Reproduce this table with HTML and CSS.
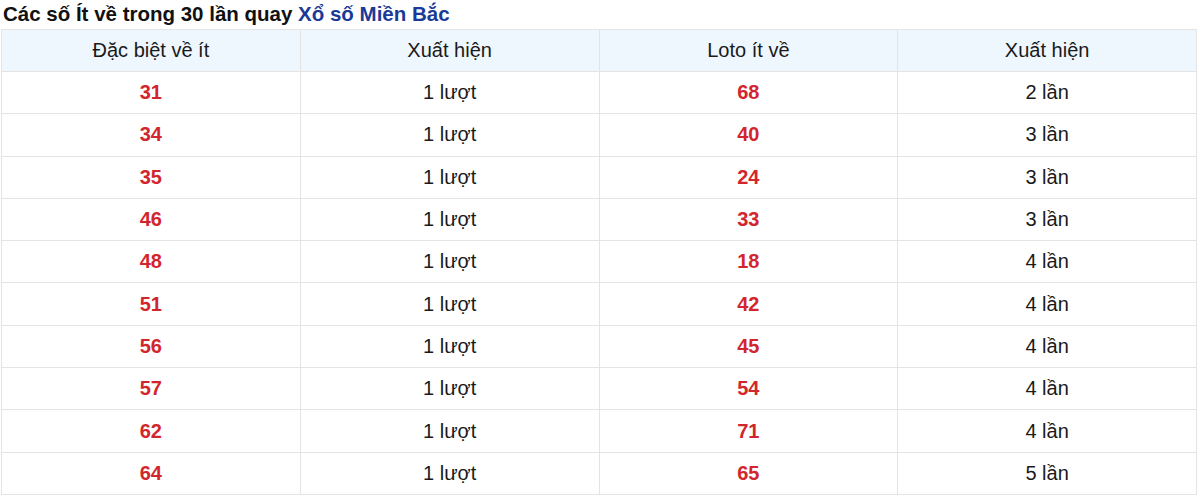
FILE: index.html
```html
<!DOCTYPE html>
<html lang="vi">
<head>
<meta charset="utf-8">
<title>Các số Ít về trong 30 lần quay</title>
<link rel="stylesheet" href="styles.css">
</head>
<body>
<div class="wrap">
  <h2 class="title">Các số Ít về trong 30 lần quay <a class="title-link" href="#">Xổ số Miền Bắc</a></h2>
  <table class="stats">
    <thead>
      <tr><th>Đặc biệt về ít</th><th>Xuất hiện</th><th>Loto ít về</th><th>Xuất hiện</th></tr>
    </thead>
    <tbody>
      <tr><td class="num">31</td><td>1 lượt</td><td class="num">68</td><td>2 lần</td></tr>
      <tr><td class="num">34</td><td>1 lượt</td><td class="num">40</td><td>3 lần</td></tr>
      <tr><td class="num">35</td><td>1 lượt</td><td class="num">24</td><td>3 lần</td></tr>
      <tr><td class="num">46</td><td>1 lượt</td><td class="num">33</td><td>3 lần</td></tr>
      <tr><td class="num">48</td><td>1 lượt</td><td class="num">18</td><td>4 lần</td></tr>
      <tr><td class="num">51</td><td>1 lượt</td><td class="num">42</td><td>4 lần</td></tr>
      <tr><td class="num">56</td><td>1 lượt</td><td class="num">45</td><td>4 lần</td></tr>
      <tr><td class="num">57</td><td>1 lượt</td><td class="num">54</td><td>4 lần</td></tr>
      <tr><td class="num">62</td><td>1 lượt</td><td class="num">71</td><td>4 lần</td></tr>
      <tr><td class="num">64</td><td>1 lượt</td><td class="num">65</td><td>5 lần</td></tr>
    </tbody>
  </table>
</div>
</body>
</html>
```
FILE: styles.css
```css
html, body {
  margin: 0;
  padding: 0;
  background: #ffffff;
  font-family: "Liberation Sans", Arial, sans-serif;
  color: #222222;
}
.wrap {
  padding: 0 3px 0 1px;
}
.title {
  margin: 0;
  padding: 0 0 0 2px;
  height: 29px;
  line-height: 28px;
  font-size: 20.5px;
  font-weight: bold;
  color: #111111;
}
.title-link {
  color: #1a3a98;
  text-decoration: none;
}
.stats {
  width: 100%;
  border-collapse: collapse;
  table-layout: fixed;
  font-size: 20px;
}
.stats th,
.stats td {
  border: 1px solid #e4e4e4;
  text-align: center;
  height: 42.3px;
  padding: 0 8px;
  box-sizing: border-box;
  font-weight: normal;
  color: #1a1a1a;
}
.stats th {
  height: 42px;
  background: #eef6fe;
}
.stats td.num {
  color: #d2262e;
  font-weight: bold;
}
```
